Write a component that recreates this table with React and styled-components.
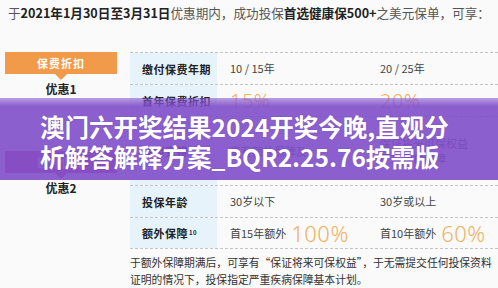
import React from "react";
import styled, { createGlobalStyle } from "styled-components";

const GlobalStyle = createGlobalStyle`
  html, body {
    margin: 0;
    padding: 0;
    background: #fafafa;
  }
  body {
    font-family: "Noto Sans CJK SC", "Noto Sans", sans-serif;
    color: #333;
  }
`;

const Page = styled.div`
  position: relative;
  width: 498px;
  height: 288px;
  overflow: hidden;
  background: #fafafa;
`;

const Intro = styled.div`
  padding: 4px 0 0 8px;
  font-size: 12.6px;
  line-height: 18px;
  color: #555;
  white-space: nowrap;
  b {
    color: #222;
    font-weight: 700;
  }
`;

const Main = styled.div`
  display: flex;
  gap: 13px;
  margin-top: 30px;
  padding-left: 5px;
`;

const Side = styled.div`
  width: 112px;
  flex: none;
  display: flex;
  flex-direction: column;
  align-items: center;
`;

const Tag = styled.div`
  width: 112px;
  height: 22px;
  margin-top: ${(p) => p.$top || 0}px;
  background: ${(p) => p.$color};
  color: #fff;
  font-size: 11px;
  font-weight: 700;
  letter-spacing: 1px;
  display: flex;
  align-items: center;
  justify-content: center;
  position: relative;
  &::after {
    content: "";
    position: absolute;
    left: 50%;
    bottom: -6px;
    margin-left: -6px;
    border-left: 6px solid transparent;
    border-right: 6px solid transparent;
    border-top: 6px solid ${(p) => p.$color};
  }
`;

const Offer = styled.div`
  margin-top: 7px;
  font-size: 12px;
  font-weight: 700;
  line-height: 16px;
  color: #222;
`;

const Table = styled.div`
  flex: 1;
  border-top: 1px dashed #c4c4c4;
`;

const Row = styled.div`
  display: grid;
  grid-template-columns: 87px 150px 1fr;
  height: ${(p) => p.$h}px;
  border-bottom: 1px dashed #c4c4c4;
`;

const Label = styled.div`
  background: #e6f3fa;
  padding-left: 12px;
  display: flex;
  align-items: center;
  font-size: 11px;
  font-weight: 700;
  color: #222;
  letter-spacing: 0.5px;
  sup {
    font-size: 6px;
    margin-left: 1px;
    align-self: flex-start;
    margin-top: 10px;
  }
`;

const Cell = styled.div`
  padding-left: 13px;
  display: flex;
  align-items: center;
  font-size: 11px;
  color: #444;
  line-height: 15px;
`;

const Pct = styled.span`
  font-family: "Noto Sans", "Open Sans", sans-serif;
  font-weight: 300;
  font-size: ${(p) => p.$size}px;
  color: #f1b060;
  margin-left: ${(p) => (p.$gap ? 5 : 0)}px;
  letter-spacing: 0.5px;
`;

const Note = styled.p`
  margin: 5px 0 0 130px;
  font-size: 10.8px;
  line-height: 17px;
  color: #333;
  white-space: nowrap;
`;

const Banner = styled.div`
  position: absolute;
  left: 0;
  right: 0;
  top: 98px;
  height: 82px;
  background: linear-gradient(
    to bottom,
    rgba(133, 84, 204, 0.55) 0px,
    rgba(128, 78, 202, 0.9) 8px,
    rgba(128, 78, 202, 0.9) 100%
  );
  box-sizing: border-box;
  padding: 14px 0 0 40px;
  color: #fff;
  font-size: 24.5px;
  font-weight: 700;
  line-height: 30px;
  white-space: nowrap;
  text-shadow: 0 0 1px rgba(60, 20, 110, 0.4);
`;

export default function App() {
  return (
    <Page>
      <GlobalStyle />
      <Intro>
        于<b>2021年1月30日至3月31日</b>优惠期内，成功投保<b>首选健康保500+</b>之美元保单，可享：
      </Intro>
      <Main>
        <Side>
          <Tag $color="#f09a4a">保费折扣</Tag>
          <Offer>优惠1</Offer>
          <Tag $color="#c64d8e" $top={54}>额外保障</Tag>
          <Offer>优惠2</Offer>
        </Side>
        <Table>
          <Row $h={31}>
            <Label>缴付保费年期</Label>
            <Cell>10 / 15年</Cell>
            <Cell>20 / 25年</Cell>
          </Row>
          <Row $h={31}>
            <Label>首年保费折扣</Label>
            <Cell>
              <Pct $size={20}>15%</Pct>
            </Cell>
            <Cell>
              <Pct $size={20}>20%</Pct>
            </Cell>
          </Row>
          <Row $h={68}>
            <Label>保障安排</Label>
            <Cell>享有额外保障及</Cell>
            <Cell>保证将来可保权益
              <br />
              严重疾病保障
            </Cell>
          </Row>
          <Row $h={31}>
            <Label>投保年龄</Label>
            <Cell>30岁以下</Cell>
            <Cell>30岁或以上</Cell>
          </Row>
          <Row $h={30}>
            <Label>
              额外保障<sup>10</sup>
            </Label>
            <Cell>
              首15年额外<Pct $size={22} $gap>100%</Pct>
            </Cell>
            <Cell>
              首10年额外<Pct $size={22} $gap>60%</Pct>
            </Cell>
          </Row>
        </Table>
      </Main>
      <Note>
        于额外保障期满后，可享有“保证将来可保权益”，于无需提交任何投保资料
        <br />
        证明的情况下，投保指定严重疾病保障基本计划。
      </Note>
      <Banner>
        澳门六开奖结果2024开奖今晚,直观分
        <br />
        析解答解释方案_BQR2.25.76按需版
      </Banner>
    </Page>
  );
}
